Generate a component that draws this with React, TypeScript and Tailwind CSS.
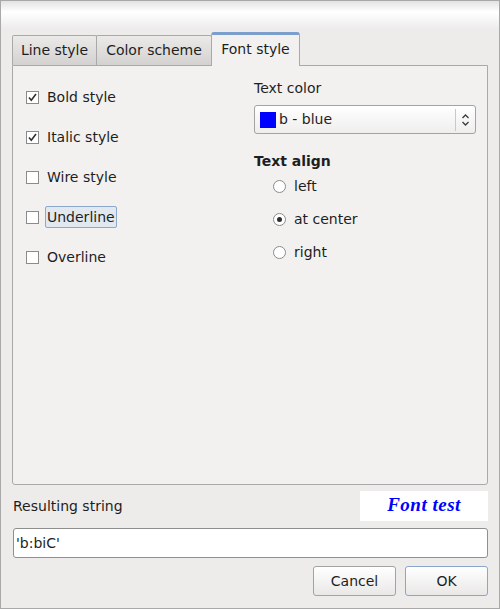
import React from "react";

const tabs = [
  { label: "Line style", w: "w-[85px]" },
  { label: "Color scheme", w: "w-[116px]" },
];

const checks = [
  { label: "Bold style", on: true },
  { label: "Italic style", on: true },
  { label: "Wire style", on: false },
  { label: "Underline", on: false, focus: true },
  { label: "Overline", on: false },
];

const aligns = [
  { label: "left", on: false },
  { label: "at center", on: true },
  { label: "right", on: false },
];

function CheckBox({ on }: { on: boolean }) {
  return (
    <div className="w-[13px] h-[13px] border border-[#8b8b8b] bg-white flex items-center justify-center shrink-0">
      {on && (
        <svg viewBox="0 0 11 11" className="w-[11px] h-[11px]">
          <path d="M2 5.5 L4.3 8.2 L9 2" fill="none" stroke="#2e2e2e" strokeWidth={1.6} />
        </svg>
      )}
    </div>
  );
}

function Radio({ on }: { on: boolean }) {
  return (
    <div className="w-[13px] h-[13px] rounded-full border border-[#8b8b8b] bg-white flex items-center justify-center shrink-0">
      {on && <div className="w-[5px] h-[5px] rounded-full bg-[#2e2e2e]" />}
    </div>
  );
}

export default function App() {
  return (
    <div
      className="w-[500px] h-[609px] border border-[#a9a9a9] flex flex-col text-[14px] text-[#1e1e1e] bg-[linear-gradient(to_bottom,#e4e3e2_0px,#ffffff_11px,#edeceb_28px,#edeceb_100%)]"
      style={{ fontFamily: "'DejaVu Sans', sans-serif" }}
    >
      {/* tab bar */}
      <div className="mt-[30px] pl-[11px] flex items-end h-[34px]">
        {tabs.map((t) => (
          <div
            key={t.label}
            className={"h-[30px] -mr-px border border-b-0 border-[#a9a9a9] rounded-t-[2px] bg-[linear-gradient(to_bottom,#ebeae9,#d3d2d1)] flex items-center justify-center " + t.w}
          >
            {t.label}
          </div>
        ))}
        <div className="h-[34px] w-[89px] border border-b-0 border-[#a9a9a9] border-t-[3px] border-t-[#7b9ecb] rounded-t-[3px] bg-[#f2f1f0] flex items-center justify-center relative z-10 -mb-px pb-[2px]">
          Font style
        </div>
      </div>

      {/* panel */}
      <div className="ml-[11px] w-[476px] h-[420px] border border-[#a9a9a9] rounded-b-[3px] bg-[#f2f1f0] grid grid-cols-[241px_1fr]">
        <div className="pl-[13px] pt-[11px] flex flex-col">
          {checks.map((c) => (
            <div key={c.label} className="h-[40px] flex items-center">
              <CheckBox on={c.on} />
              <span
                className={
                  c.focus
                    ? "ml-[6px] px-[1px] h-[22px] flex items-center border border-[#8ea8cc] rounded-[2px] bg-[#e2e8f0]"
                    : "ml-[8px]"
                }
              >
                {c.label}
              </span>
            </div>
          ))}
        </div>

        <div className="pt-[12px] flex flex-col">
          <div className="h-[20px] flex items-center">Text color</div>
          <div className="mt-[7px] w-[222px] h-[29px] border border-[#a3a3a3] rounded-[3px] bg-[linear-gradient(to_bottom,#ffffff,#efeeed)] flex items-center">
            <div className="ml-[5px] w-[16px] h-[16px] bg-[#0000ff]" />
            <span className="ml-[3px] flex-1">b - blue</span>
            <div className="w-px h-[22px] bg-[#c9c9c9]" />
            <div className="w-[19px] flex items-center justify-center">
              <svg viewBox="0 0 9 14" className="w-[9px] h-[14px]">
                <path d="M1.5 5 L4.5 2 L7.5 5 M1.5 9 L4.5 12 L7.5 9" fill="none" stroke="#3a3a3a" strokeWidth={1.3} />
              </svg>
            </div>
          </div>
          <div className="mt-[17px] h-[20px] flex items-center font-bold">Text align</div>
          <div className="-mt-px flex flex-col">
            {aligns.map((a) => (
              <div key={a.label} className="h-[33px] pl-[19px] flex items-center">
                <Radio on={a.on} />
                <span className="ml-[8px]">{a.label}</span>
              </div>
            ))}
          </div>
        </div>
      </div>

      {/* result row */}
      <div className="mt-[5px] h-[31px] flex items-center">
        <span className="ml-[12px] flex-1 pt-[2px]">Resulting string</span>
        <div className="w-[128px] h-[30px] bg-white mr-[11px] flex items-center justify-center">
          <span
            className="text-[#0000ff] font-bold italic text-[19px] tracking-[0.5px]"
            style={{ fontFamily: "'Liberation Serif', serif" }}
          >
            Font test
          </span>
        </div>
      </div>

      <div className="mt-[7px] ml-[12px] w-[475px] h-[30px] border border-[#8f8f8f] rounded-[3px] bg-white flex items-center pl-[2px]">
        'b:biC'
      </div>

      <div className="mt-[8px] flex justify-end gap-[9px] pr-[11px]">
        <button className="w-[83px] h-[30px] border border-[#a3a3a3] rounded-[3px] bg-[linear-gradient(to_bottom,#ffffff,#e9e8e7)]">
          Cancel
        </button>
        <button className="w-[83px] h-[30px] border border-[#8aa6cc] rounded-[3px] bg-[linear-gradient(to_bottom,#ffffff,#e9e8e7)]">
          OK
        </button>
      </div>
    </div>
  );
}
